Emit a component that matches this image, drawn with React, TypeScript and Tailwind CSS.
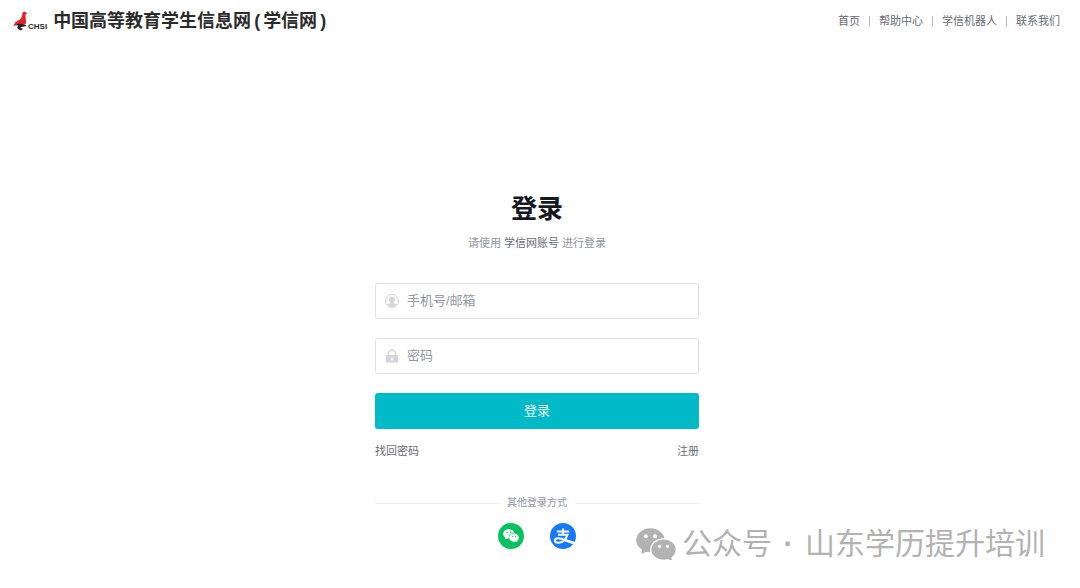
import { clsx } from 'clsx';
import type { ReactNode } from 'react';

const NAV_LINKS = ['首页', '帮助中心', '学信机器人', '联系我们'];

export default function App() {
  return (
    <div className="relative min-h-screen bg-white pr-1.5 font-['Liberation_Sans','Noto_Sans_CJK_SC',sans-serif] text-[#666b73]">
      <Header />
      <LoginPanel />
      <Watermark />
    </div>
  );
}

function Header() {
  return (
    <header className="flex h-[42px] items-center justify-between pr-3.5 pl-3">
      <a href="#" className="flex items-center gap-1.5 text-[#2b2b2b]">
        <ChsiLogo />
        <span className="flex text-lg leading-6 font-bold whitespace-nowrap">
          中国高等教育学生信息网
          <span className="px-[3px]">(</span>
          学信网
          <span className="px-[3px]">)</span>
        </span>
      </a>
      <nav className="flex items-center text-[11px] leading-4">
        {NAV_LINKS.map((label, i) => (
          <div key={label} className="flex items-center">
            {i > 0 ? <span className="mx-[9px] h-[11px] w-px bg-[#b4b8be]" /> : null}
            <a href="#">{label}</a>
          </div>
        ))}
      </nav>
    </header>
  );
}

function ChsiLogo() {
  return (
    <span className="flex items-end">
      <svg viewBox="0 0 48 60" className="h-5 w-4 shrink-0" aria-hidden="true">
        <path
          d="M31 8c1-5 6-7 10-4l5 3-5 3c-1 9 1 16 1 23 0 6-3 9-8 8-10-3-20-2-30 5 1-5 3-7 6-9l-3-1c4-4 10-6 15-10 7-5 9-11 9-18z"
          fill="#e5222b"
        />
        <path
          d="M10 43c8-6 18-5 28-2l5 2c-3 4-7 5-12 4-5 0-7 3-4 5l6 1c-3 5-9 6-14 2-4-4-4-8 0-11-3-1-6-1-9-1z"
          fill="#222"
        />
      </svg>
      <span className="text-[8px] leading-2 font-bold">CHSI</span>
    </span>
  );
}

function LoginPanel() {
  return (
    <main className="mx-auto w-full max-w-[324px] pt-[149px]">
      <h1 className="text-center text-[26px] leading-9 font-bold text-[#16181f]">登录</h1>
      <p className="mt-2 text-center text-[11px] leading-4 text-[#9096a2]">
        请使用 <span className="text-[#666b73]">学信网账号</span> 进行登录
      </p>

      <form className="mt-8 flex flex-col gap-[19px]" onSubmit={(e) => e.preventDefault()}>
        <Field type="text" label="手机号/邮箱" icon={<UserIcon />} />
        <Field type="password" label="密码" icon={<LockIcon />} />
        <button type="submit" className="h-9 rounded-[3px] bg-[#00bac8] text-[13px] text-white">
          登录
        </button>
      </form>

      <div className="mt-3.5 flex justify-between text-[11px] leading-4">
        <a href="#">找回密码</a>
        <a href="#">注册</a>
      </div>

      <div className="mt-9 flex items-center gap-2 text-[10px] leading-4 text-[#9096a2]">
        <span className="h-px flex-1 bg-[#ededee]" />
        其他登录方式
        <span className="h-px flex-1 bg-[#ededee]" />
      </div>

      <div className="mt-3 flex justify-center gap-[26px]">
        <button type="button" aria-label="微信登录" className="flex size-[26px] items-center justify-center rounded-full bg-[#07c160]">
          <WechatIcon className="w-4 text-white" gapClassName="fill-[#07c160]" />
        </button>
        <button type="button" aria-label="支付宝登录" className="size-[26px] overflow-hidden rounded-full bg-[#1677ff]">
          <AlipayMark />
        </button>
      </div>
    </main>
  );
}

function Field(props: { type: string; label: string; icon: ReactNode }) {
  const { type, label, icon } = props;

  return (
    <label className="flex h-9 items-center gap-2 rounded-[3px] border border-[#dfe0e3] px-[9px]">
      {icon}
      <input
        type={type}
        aria-label={label}
        placeholder={label}
        className="min-w-0 flex-1 text-[13px] outline-none placeholder:text-[#9096a2]"
      />
    </label>
  );
}

function UserIcon() {
  return (
    <svg viewBox="0 0 28 28" className="size-3.5 shrink-0 text-[#d3d5da]" aria-hidden="true">
      <circle cx="14" cy="14" r="13" fill="none" stroke="currentColor" strokeWidth="2" />
      <path
        d="M14 5c4 0 6 3 6 6s-1 5-3 6v1c1 2 5 1 7 3-2 3-6 5-10 5s-8-2-10-5c2-2 6-1 7-3v-1c-2-1-3-3-3-6s2-6 6-6z"
        fill="currentColor"
      />
    </svg>
  );
}

function LockIcon() {
  return (
    <svg viewBox="0 0 28 28" className="size-3.5 shrink-0 text-[#d3d5da]" aria-hidden="true">
      <path d="M7 13V9a7 7 0 0 1 14 0v4" fill="none" stroke="currentColor" strokeWidth="3" />
      <rect x="2" y="12" width="24" height="15" rx="2" fill="currentColor" />
      <path d="M14 17v6" stroke="#fff" strokeWidth="3" />
    </svg>
  );
}

// gapClassName colours the eyes and the rim between the bubbles
function WechatIcon(props: { className: string; gapClassName: string }) {
  const { className, gapClassName } = props;

  return (
    <svg viewBox="0 0 122 100" className={clsx('shrink-0', className)} fill="currentColor" aria-hidden="true">
      <ellipse cx="44" cy="37" rx="43" ry="36" />
      <path d="M20 62l-4 17 21-9z" />
      <ellipse cx="84" cy="66" rx="41" ry="35" className={gapClassName} />
      <ellipse cx="84" cy="66" rx="37" ry="31" />
      <path d="M90 93l20 6-4-16z" />
      <g className={gapClassName}>
        <circle cx="30" cy="25" r="6" />
        <circle cx="58" cy="25" r="6" />
        <circle cx="72" cy="56" r="5" />
        <circle cx="96" cy="56" r="5" />
      </g>
    </svg>
  );
}

function AlipayMark() {
  return (
    <svg viewBox="0 0 80 80" className="size-full" fill="none" stroke="#fff" strokeWidth="6" aria-hidden="true">
      <path d="M21 26h38M40 17v19M25 36h29c-5 14-15 25-29 25-13 0-14-13-1-14 12-1 27 8 56 17" />
      <path d="M48 50l34 10v9L45 56z" fill="#fff" stroke="none" />
    </svg>
  );
}

function Watermark() {
  return (
    <div className="pointer-events-none absolute right-[35px] bottom-5 flex items-center text-[30px] leading-[48px] whitespace-nowrap text-[#b2b2b2]">
      <WechatIcon className="mr-1.5 w-10" gapClassName="fill-white" />
      <span>公众号</span>
      <span className="w-[33px] text-center font-bold">·</span>
      <span>山东学历提升培训</span>
    </div>
  );
}
